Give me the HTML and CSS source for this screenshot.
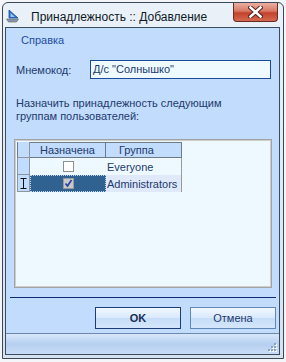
FILE: index.html
```html
<!DOCTYPE html>
<html lang="ru">
     <head>
          <meta http-equiv="Content-type" content="text/html; charset=utf-8">
          <title>Принадлежность :: Добавление</title>
          <link rel="stylesheet" href="styles.css">
     </head>
     <body>
          <div class="window">
               <div class="titlebar">
                    <svg class="app-icon" width="13" height="14" viewBox="0 0 13 14">
                         <path d="M3 1 L12 9 L3 9 Z" fill="#2e6fd2" stroke="#1a4c9e" stroke-width="0.8"/>
                         <path d="M4.5 4 L9 8 L4.5 8 Z" fill="#9cc4f5"/>
                         <path d="M0.5 10 L12.5 10 L10.5 13 L2.5 13 Z" fill="#8a96a4" stroke="#5b6675" stroke-width="0.6"/>
                    </svg>
                    <span class="title">Принадлежность :: Добавление</span>
                    <div class="close-btn">
                         <svg width="15" height="12" viewBox="0 0 15 12">
                              <path d="M2.5 1.5 L12.5 10.5 M12.5 1.5 L2.5 10.5" stroke="#4a1a14" stroke-width="4.4" stroke-linecap="square"/>
                              <path d="M2.5 1.5 L12.5 10.5 M12.5 1.5 L2.5 10.5" stroke="#ffffff" stroke-width="2.6" stroke-linecap="square"/>
                         </svg>
                    </div>
               </div>
               <div class="client">
                    <div class="menubar"><span class="menu-item">Справка</span></div>
                    <div class="field-row">
                         <span class="label">Мнемокод:</span>
                         <div class="textbox">Д/с "Солнышко"</div>
                    </div>
                    <div class="hint">Назначить принадлежность следующим<br>группам пользователей:</div>
                    <div class="grid-panel">
                         <div class="grid">
                              <div class="cell row-head head"></div>
                              <div class="cell head">Назначена</div>
                              <div class="cell head head-group">Группа</div>

                              <div class="cell row-head"></div>
                              <div class="cell check-cell"><span class="checkbox"></span></div>
                              <div class="cell group-cell">Everyone</div>

                              <div class="cell row-head">
                                   <svg width="7" height="11" viewBox="0 0 7 11">
                                        <path d="M0.5 0.5 H6.5 M3.5 0.5 V10.5 M0.5 10.5 H6.5" stroke="#111" stroke-width="1" fill="none"/>
                                   </svg>
                              </div>
                              <div class="cell check-cell selected">
                                   <span class="checkbox checked">
                                        <svg width="9" height="9" viewBox="0 0 9 9">
                                             <path d="M1.5 4.5 L3.5 7 L7.5 1" stroke="#2a46a8" stroke-width="1.8" fill="none"/>
                                        </svg>
                                   </span>
                              </div>
                              <div class="cell group-cell current">Administrators</div>
                         </div>
                    </div>
                    <div class="separator"></div>
                    <div class="buttons">
                         <div class="button default">OK</div>
                         <div class="button">Отмена</div>
                    </div>
                    <div class="statusbar">
                         <svg class="grip" width="11" height="11" viewBox="0 0 11 11">
                              <rect x="8" y="2" width="2" height="2" fill="#f4f8fd"/>
                              <rect x="5" y="5" width="2" height="2" fill="#f4f8fd"/>
                              <rect x="8" y="5" width="2" height="2" fill="#f4f8fd"/>
                              <rect x="2" y="8" width="2" height="2" fill="#f4f8fd"/>
                              <rect x="5" y="8" width="2" height="2" fill="#f4f8fd"/>
                              <rect x="8" y="8" width="2" height="2" fill="#f4f8fd"/>
                              <rect x="7" y="1" width="2" height="2" fill="#8aa3c2"/>
                              <rect x="4" y="4" width="2" height="2" fill="#8aa3c2"/>
                              <rect x="7" y="4" width="2" height="2" fill="#8aa3c2"/>
                              <rect x="1" y="7" width="2" height="2" fill="#8aa3c2"/>
                              <rect x="4" y="7" width="2" height="2" fill="#8aa3c2"/>
                              <rect x="7" y="7" width="2" height="2" fill="#8aa3c2"/>
                         </svg>
                    </div>
               </div>
          </div>
     </body>
</html>
```

FILE: styles.css
```css
html{
     height: 100%;
}
body{
     margin: 0;
     padding: 0;
     background-color: #f3f5f8;
     font-family: "Liberation Sans", Arial, sans-serif;
     font-size: 11px;
     color: #1e3a6e;
}
.window{
     margin: 2px 2px 3px 2px;
     width: 282px;
     height: 357px;
     box-sizing: border-box;
     border: 1px solid #3a4858;
     border-radius: 6px 6px 0 0;
     background: linear-gradient(#eaf1f8, #d6e2ee);
     padding: 0 3px 3px 2px;
     display: flex;
     flex-direction: column;
}
.titlebar{
     height: 24px;
     display: flex;
     align-items: center;
     padding-left: 1px;
     position: relative;
}
.app-icon{
     margin-top: 2px;
     margin-right: 12px;
}
.title{
     font-size: 12px;
     color: #0f1a28;
     padding-top: 3px;
}
.close-btn{
     position: absolute;
     top: 0;
     right: 2px;
     width: 45px;
     height: 19px;
     box-sizing: border-box;
     border: 1px solid #6a2a22;
     border-top: none;
     border-radius: 0 0 4px 4px;
     background: linear-gradient(#eab0a2 0%, #d77864 45%, #c2412c 55%, #d46a52 100%);
     display: flex;
     align-items: center;
     justify-content: center;
}
.client{
     flex: 1;
     border: 1px solid #3c4c60;
     background-color: #c1dcfc;
     display: flex;
     flex-direction: column;
}
.menubar{
     height: 22px;
     box-sizing: border-box;
     padding: 6px 0 0 15px;
}
.menu-item{
     color: #1f4ea3;
}
.field-row{
     margin-top: 10px;
     display: flex;
     align-items: center;
     padding-left: 10px;
}
.label{
     width: 74px;
}
.textbox{
     width: 181px;
     height: 19px;
     box-sizing: border-box;
     border: 1px solid #1a4a9a;
     background-color: #eefaff;
     padding: 2px 0 0 2px;
     color: #1a3a70;
}
.hint{
     margin-top: 18px;
     padding-left: 10px;
     line-height: 13px;
}
.grid-panel{
     margin: 16px 0 0 8px;
     width: 258px;
     height: 149px;
     box-sizing: border-box;
     border: 1px solid #a3a3a3;
     box-shadow: inset 0 0 0 1px #cdcdcd;
     background-color: #eef9ff;
     padding: 2px 0 0 2px;
}
.grid{
     display: grid;
     grid-template-columns: 13px 76px 76px;
     grid-template-rows: 16px 17px 17px;
}
.cell{
     box-sizing: border-box;
     display: flex;
     align-items: center;
}
.head{
     background-color: #c1dcfc;
     border: 1px solid #6f7a86;
     border-left: none;
     justify-content: center;
     color: #1e3a6e;
}
.head.row-head{
     border-left: 1px solid #6f7a86;
}
.head-group{
     justify-content: flex-start;
     padding-left: 13px;
}
.row-head{
     background-color: #c1dcfc;
     border: 1px solid #8d96a0;
     border-top: none;
     justify-content: center;
}
.check-cell{
     justify-content: center;
}
.group-cell{
     padding-left: 1px;
     border-right: 1px solid #9a9a9a;
}
.current{
     background-color: #dfe9fa;
}
.selected{
     background-color: #2f6191;
     border: 1px dotted #c4d6ea;
}
.checkbox{
     width: 11px;
     height: 11px;
     box-sizing: border-box;
     border: 1px solid #8e8e8e;
     background-color: #ffffff;
     display: flex;
     align-items: center;
     justify-content: center;
}
.checkbox.checked{
     background-color: #c9c9c9;
     border-color: #9a9a9a;
}
.separator{
     margin: 9px 0 0 4px;
     width: 266px;
     height: 1px;
     background-color: #0c2c74;
}
.buttons{
     margin-top: 9px;
     display: flex;
     justify-content: flex-end;
     gap: 9px;
     padding-right: 3px;
}
.button{
     width: 86px;
     height: 22px;
     box-sizing: border-box;
     border: 1px solid #5f88b8;
     background: linear-gradient(#f2f8ff, #d8e8fc 50%, #c6ddf8 51%, #d4e6fb);
     display: flex;
     align-items: center;
     justify-content: center;
     color: #1e3a6e;
}
.button.default{
     border-color: #1d3d7a;
     font-weight: bold;
     color: #182c52;
}
.statusbar{
     margin-top: auto;
     height: 21px;
     box-sizing: border-box;
     border-top: 1px solid #6c89ad;
     background: linear-gradient(#d8e8fb, #b6cff0 50%, #c9ddf7);
     display: flex;
     justify-content: flex-end;
     align-items: flex-end;
}
.grip{
     margin: 0 1px 1px 0;
}
```
